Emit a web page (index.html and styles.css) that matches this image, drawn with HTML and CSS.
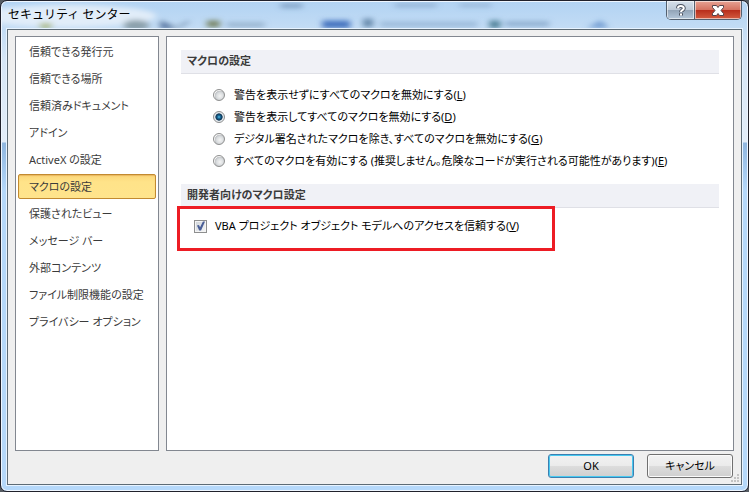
FILE: index.html
```
<!DOCTYPE html>
<html lang="ja">
<head>
<meta charset="utf-8">
<title>セキュリティ センター</title>
<link rel="stylesheet" href="styles.css">
</head>
<body>
<div class="window">
  <header class="titlebar">
    <svg class="backdrop" viewBox="0 0 749 29" preserveAspectRatio="none" aria-hidden="true">
      <defs><filter id="soft" x="-20%" y="-50%" width="140%" height="200%"><feGaussianBlur stdDeviation="3"/></filter></defs>
      <g filter="url(#soft)">
        <ellipse cx="65" cy="15" rx="90" ry="12" fill="#e6effa" opacity=".9"/>
        <rect x="38" y="23" width="12" height="5" fill="#a6b46a"/>
        <ellipse cx="135" cy="25" rx="13" ry="6" fill="#8ba0ac"/>
        <path d="M160 21l14 7h-14zM176 28l12-7" fill="#4264a8" stroke="#607d9c" stroke-width="2"/>
        <rect x="206" y="20" width="13" height="7" fill="#75815f"/>
        <rect x="226" y="22" width="38" height="5" fill="#7794b0" opacity=".6"/>
        <rect x="280" y="2" width="22" height="4" fill="#5b7da4" opacity=".7"/>
        <rect x="322" y="20" width="28" height="8" fill="#3f70bd"/>
        <rect x="363" y="18" width="10" height="9" fill="#6588aa"/>
        <rect x="380" y="21" width="98" height="6" fill="#769bbf" opacity=".5"/>
        <rect x="395" y="2" width="42" height="3" fill="#6584aa" opacity=".6"/>
        <rect x="460" y="2" width="32" height="3" fill="#6584aa" opacity=".5"/>
        <rect x="490" y="20" width="11" height="8" fill="#4e8096"/>
        <rect x="506" y="21" width="44" height="5" fill="#6389b0" opacity=".6"/>
        <path d="M588 28l14-8 8 8z" fill="#4d7fc0" opacity=".7"/>
      </g>
    </svg>
    <h1 class="title">セキュリティ センター</h1>
    <div class="caption">
      <button class="cap help" type="button" aria-label="ヘルプ">
        <svg width="12" height="13" viewBox="0 0 12 13"><path d="M3 4.3C3 1.4 8.800 1.300 8.800 4.300 8.800 6.200 6 6 6 8.200M6 9.300v2.200" fill="none" stroke="#4b5260" stroke-width="4"/><path d="M3 4.300C3 1.400 8.800 1.300 8.800 4.300 8.800 6.200 6 6 6 8M6 9.500v2" fill="none" stroke="#fff" stroke-width="2"/></svg>
      </button>
      <button class="cap close" type="button" aria-label="閉じる">
        <svg width="12" height="11" viewBox="0 0 12 11"><path d="M.5.5h4L6 2.500 7.500.5h4v2L9 5.500l2.500 3v2h-4L6 8.500l-1.500 2h-4v-2L3 5.500l-2.500-3z" fill="#fff" stroke="#554349"/></svg>
      </button>
    </div>
  </header>
  <main class="client">
    <div class="panels">
      <nav class="categories">
        <a href="#">信頼できる発行元</a>
        <a href="#">信頼できる場所</a>
        <a href="#">信頼済みドキュメント</a>
        <a href="#">アドイン</a>
        <a href="#">ActiveX の設定</a>
        <a href="#" class="selected" aria-current="page">マクロの設定</a>
        <a href="#">保護されたビュー</a>
        <a href="#">メッセージ バー</a>
        <a href="#">外部コンテンツ</a>
        <a href="#">ファイル制限機能の設定</a>
        <a href="#">プライバシー オプション</a>
      </nav>
      <section class="settings">
        <h2>マクロの設定</h2>
        <div class="radios">
          <label><input type="radio" name="macro"><span>警告を表示せずにすべてのマクロを無効にする(<u>L</u>)</span></label>
          <label><input type="radio" name="macro" checked><span>警告を表示してすべてのマクロを無効にする(<u>D</u>)</span></label>
          <label><input type="radio" name="macro"><span>デジタル署名されたマクロを除き、すべてのマクロを無効にする(<u>G</u>)</span></label>
          <label><input type="radio" name="macro"><span>すべてのマクロを有効にする (推奨しません。危険なコードが実行される可能性があります)(<u>E</u>)</span></label>
        </div>
        <h2>開発者向けのマクロ設定</h2>
        <div class="developer">
          <label><input type="checkbox" checked><span>VBA プロジェクト オブジェクト モデルへのアクセスを信頼する(<u>V</u>)</span></label>
          <div class="highlight"></div>
        </div>
      </section>
    </div>
    <footer class="actions">
      <button type="button" class="btn default">OK</button>
      <button type="button" class="btn">キャンセル</button>
    </footer>
    <svg class="grip" width="8" height="8" viewBox="0 0 8 8" aria-hidden="true"><path d="M6 0h2v2H6zM3 3h2v2H3zM6 3h2v2H6zM0 6h2v2H0zM3 6h2v2H3zM6 6h2v2H6z" fill="#c3c3c3"/></svg>
  </main>
</div>
</body>
</html>
```
FILE: styles.css
```
* {
  box-sizing: border-box;
}

body {
  margin: 0;
  background: #555b62;
  color: #000;
  font: 11px/18px "Noto Sans", "Noto Sans CJK JP", sans-serif;
  font-feature-settings: "palt";
}

button,
input {
  margin: 0;
  font: inherit;
  font-feature-settings: inherit;
}

.window {
  display: flex;
  flex-direction: column;
  min-height: 100vh;
  padding: 0 6px 6px;
  border: 1px solid #20212b;
  border-radius: 7px;
  box-shadow: inset 0 0 0 1px #eef6ff;
  background: linear-gradient(#b2d3f3 0, #d6e6f6 60px, #e3edf8 141px, #8fb6df 142px, #b5d8fa 190px, #b5d8fa);
}

.titlebar {
  position: relative;
  display: flex;
  justify-content: space-between;
  align-items: flex-start;
  height: 28px;
  margin: 0 -5px;
  padding-left: 6px;
  overflow: hidden;
}

.backdrop {
  position: absolute;
  inset: 1px 0 0;
  width: 100%;
  height: 27px;
}

.title {
  position: relative;
  margin: 5px 0 0;
  font-size: 12px;
  font-feature-settings: normal;
  font-weight: 400;
  line-height: 18px;
}

.caption {
  position: relative;
  display: flex;
  margin-right: 5px;
  border: 1px solid #53606f;
  border-top: 0;
  border-radius: 0 0 5px 5px;
  overflow: hidden;
}

.cap {
  display: flex;
  align-items: center;
  justify-content: center;
  height: 18px;
  padding: 0;
  border: 0;
  box-shadow: inset 0 0 0 1px #ffffff90;
}

.help {
  width: 27px;
  background: linear-gradient(#d5dfea 0, #bdcad8 50%, #91a3b6 50%, #b4c7da);
}

.close {
  width: 47px;
  border-left: 1px solid #53606f;
  background: linear-gradient(#e7a394 0, #d5715f 50%, #b72c1a 50%, #d35c40);
}

.client {
  position: relative;
  display: flex;
  flex: 1;
  flex-direction: column;
  padding: 6px 7px;
  border: 1px solid #5d6b75;
  outline: 1px solid #e7f3ff;
  background: #efefef;
}

.panels {
  display: flex;
  flex: 1;
  gap: 7px;
}

.categories,
.settings {
  border: 1px solid #828790;
  background: #fff;
}

.categories {
  display: flex;
  flex: 0 0 144px;
  flex-direction: column;
  gap: 2px;
  padding: 2px;
}

.categories a {
  padding: 3px 10px 2px;
  border: 1px solid transparent;
  border-radius: 2px;
  color: #3b3b3b;
  line-height: 18px;
  text-decoration: none;
  white-space: nowrap;
}

.categories .selected {
  border-color: #c28a30;
  background: linear-gradient(#fbd67a, #ffe389 30%, #ffe48c);
  box-shadow: inset 0 1px 1px #e9b860;
}

.settings {
  flex: 1;
  padding: 13px 14px;
}

h2 {
  margin: 0;
  padding: 2px 6px 3px;
  border-bottom: 1px solid #dfe0e6;
  background: #f0f1f6;
  color: #3b3b3b;
  font-size: 11px;
  font-weight: 700;
  line-height: 18px;
}

.radios {
  display: flex;
  flex-direction: column;
  padding: 10px 0 12px 32px;
}

label {
  display: flex;
  align-items: center;
  height: 22px;
  white-space: nowrap;
}

u {
  text-underline-offset: 1px;
}

input {
  appearance: none;
  flex: none;
}

input[type="radio"] {
  width: 12px;
  height: 12px;
  margin-right: 9px;
  border: 1px solid #8e8f8f;
  border-radius: 50%;
  background: radial-gradient(circle at 60% 60%, #f4f4f4 0, #dadddf 40%, #c0c3c6 60%, #f4f4f4 64%);
}

input[type="radio"]:checked {
  background: radial-gradient(circle, #59c6ee 0, #1a6d9d 20%, #0b304f 46%, #e6ebef 56%);
}

input[type="checkbox"] {
  width: 13px;
  height: 13px;
  margin-right: 8px;
  border: 1px solid #8e8f8f;
  background: linear-gradient(135deg, #ced3d9, #f6f6f6);
  box-shadow: inset 0 0 0 1px #f4f4f4;
}

input[type="checkbox"]:checked::before {
  content: "";
  display: block;
  width: 11px;
  height: 11px;
  background: #4a5f97;
  clip-path: polygon(18% 45%, 36% 42%, 46% 62%, 72% 9%, 91% 9%, 55% 90%, 38% 90%);
}

.developer {
  position: relative;
  padding: 7px 0 0 13px;
}

.highlight {
  position: absolute;
  top: -2px;
  left: -4px;
  width: 378px;
  height: 45px;
  border: 3px solid #ed1c24;
  pointer-events: none;
}

.actions {
  display: flex;
  justify-content: flex-end;
  gap: 13px;
  padding: 3px 1px 0 0;
}

.btn {
  width: 86px;
  height: 24px;
  padding: 0;
  border: 1px solid #707070;
  border-radius: 3px;
  background: linear-gradient(#f2f2f2, #ebebeb 50%, #dddddd 50%, #cfcfcf);
  box-shadow: inset 0 0 0 1px #fbfbfb;
}

.default {
  border-color: #3c7fb1;
  box-shadow: inset 0 0 0 1px #48c9f0;
}

.grip {
  position: absolute;
  right: 2px;
  bottom: 2px;
}
```
